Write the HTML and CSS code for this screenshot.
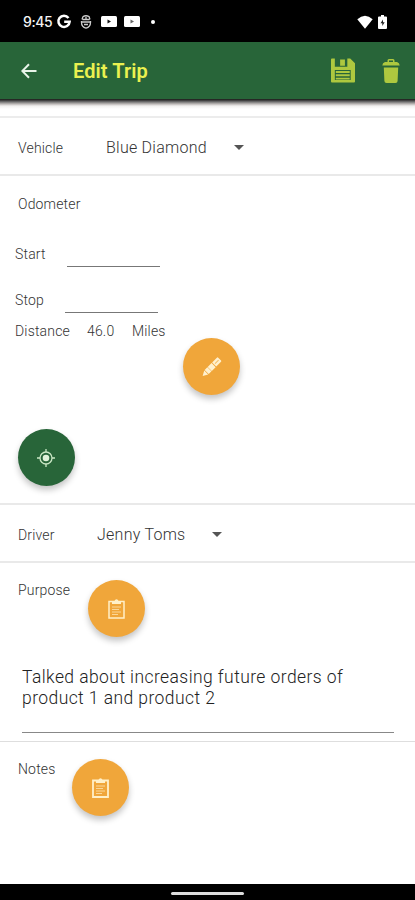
FILE: index.html
```html
<!DOCTYPE html>
<html lang="en">
<head>
<meta charset="utf-8">
<title>Edit Trip</title>
<link rel="stylesheet" href="styles.css">
</head>
<body>
<div class="phone">
  <div class="status">
    <span class="clock">9:45</span>
    <svg class="s-google" viewBox="0 0 16 16"><path d="M12.8 4.2A6 6 0 1 0 14 8.2H8.2" fill="none" stroke="#fff" stroke-width="2.7"/></svg>
    <svg class="s-badge" viewBox="0 0 12 14"><path d="M3 1.500Q6 0 9 1.500L10 4.500M1.500 6Q1 12 6 13.200Q11 12 10.500 6M2 4.500L3 1.500M2.500 4.500H9.500M1.500 7H10.500M4 9.500H8M6 2v3" fill="none" stroke="#ccc" stroke-width="1.300"/></svg>
    <svg class="s-video" viewBox="0 0 16 11"><rect width="16" height="11" rx="1.500" fill="#fff"/><path d="M6.500 3.500v4l3.500-2z" fill="#111"/></svg>
    <svg class="s-video s-video-2" viewBox="0 0 16 11"><rect width="16" height="11" rx="1.500" fill="#fff"/><path d="M6.500 3.500v4l3.500-2z" fill="#666"/></svg>
    <span class="dot"></span>
    <svg class="s-wifi" viewBox="0 0 16 14"><path d="M.3 4.2Q8-2.8 15.7 4.2L8 13.8Z" fill="#fff"/></svg>
    <svg class="s-battery" viewBox="0 0 9 14"><path d="M3 0h3v1.400h2q1 0 1 1V13q0 1-1 1H1q-1 0-1-1V2.400q0-1 1-1h2z" fill="#fff"/><path d="M5 4.500L2.500 8.200H4.300V11L6.700 7.200H5z" fill="#222"/></svg>
  </div>
  <header class="appbar">
    <svg class="back" viewBox="0 0 16 16"><path d="M15.500 8H1.500M8 1.200L1.300 8L8 14.800" fill="none" stroke="#e9f4e9" stroke-width="2"/></svg>
    <h1>Edit Trip</h1>
    <svg class="save" viewBox="0 0 25 25"><path fill-rule="evenodd" fill="#aec83f" d="M1 0H4V8.500H17V0H20L25 5V24Q25 25 24 25H1Q0 25 0 24V1Q0 0 1 0ZM4 12V22.500H20.500V12Z"/><path fill="#aec83f" d="M9.500 1h5v6.500h-5zM5 13h14.500v2H5zM5 16.500h14.500v2H5zM5 20h14.500v2H5z"/></svg>
    <svg class="trash" viewBox="0 0 18 24"><path fill="#aec83f" fill-rule="evenodd" d="M5.500 3V1.500Q5.500 0 7 0H11Q12.500 0 12.500 1.500V3H15Q17.500 3.600 17.700 6.500H.300Q.500 3.600 3 3ZM7 1.500V3H11V1.500ZM1.800 8.500H16.200L15.600 22Q15.500 24 13.500 24H4.500Q2.500 24 2.400 22Z"/></svg>
  </header>
  <main>
    <div class="strip"></div>
    <section class="row vehicle">
      <span class="label">Vehicle</span><span class="choice">Blue Diamond</span><i class="caret"></i>
    </section>
    <section class="odometer">
      <div class="label heading">Odometer</div>
      <div class="field start"><span class="label">Start</span><span class="line"></span></div>
      <div class="field stop"><span class="label">Stop</span><span class="line"></span></div>
      <div class="distance label"><span class="d1">Distance</span><span class="d2">46.0</span><span class="d3">Miles</span></div>
      <button class="fab edit" aria-label="Edit"><svg width="20" height="20" viewBox="0 0 20 20"><g transform="translate(-.5 .2) rotate(-45 10 10)" fill="#fff1cf"><path d="M-2.500 10L2.500 7.200V12.800ZM3.200 7.100H7V12.900H3.200ZM7.500 7.100H13V12.900H7.500ZM13.800 7.100H20.500Q21.500 7.100 21.500 8V12Q21.500 12.900 20.500 12.900H13.800Z"/><path d="M15 10H20" stroke="#f3bd68" stroke-width="1"/></g></svg></button>
      <button class="fab locate" aria-label="Locate"><svg width="18" height="18" viewBox="0 0 18 18" fill="none" stroke="#c9e6c4" stroke-width="1.300"><circle cx="9" cy="9" r="6"/><circle cx="9" cy="9" r="3.300" fill="#e0f2da" stroke="none"/><path d="M9 0v3M9 15v3M0 9h3M15 9h3"/></svg></button>
    </section>
    <section class="row driver">
      <span class="label">Driver</span><span class="choice">Jenny Toms</span><i class="caret"></i>
    </section>
    <section class="purpose">
      <div class="head"><span class="label">Purpose</span>
        <button class="fab" aria-label="Purpose list"><svg width="17" height="20" viewBox="0 0 17 20"><path d="M1 2.500H16V19H1Z" fill="none" stroke="#fff0c8" stroke-width="1.500"/><path d="M4 2H6.500Q7 .200 8.500 .200T10.500 2H13V5H4Z" fill="#fff0c8"/><path d="M4 8h9M4 10.500h7M4 13h9M4 15.500h6" stroke="#fbd797"/></svg></button></div>
      <p class="memo">Talked about increasing future orders of<br>product 1 and product 2</p>
    </section>
    <section class="notes">
      <div class="head"><span class="label">Notes</span>
        <button class="fab" aria-label="Notes list"><svg width="17" height="20" viewBox="0 0 17 20"><path d="M1 2.500H16V19H1Z" fill="none" stroke="#fff0c8" stroke-width="1.800"/><path d="M4 2H6.500Q7 .200 8.500 .200T10.500 2H13V5H4Z" fill="#fff0c8"/><path d="M4 8h9M4 10.500h7M4 13h9M4 15.500h6" stroke="#fbd797"/></svg></button></div>
    </section>
  </main>
  <footer class="nav"><span class="pill"></span></footer>
</div>
</body>
</html>
```
FILE: styles.css
```css
* { box-sizing: border-box; }
body { margin: 0; background: #fff; font-family: Roboto, "Liberation Sans", sans-serif; color: #444; }
.phone { width: 415px; height: 900px; display: flex; flex-direction: column; overflow: hidden; }
svg { display: block; flex: none; }

.status { height: 42px; flex: none; background: #000; display: flex; align-items: center; padding: 1px 28px 0 23px; color: #f4f4f4; }
.clock { width: 29px; font: 500 14px/20px Inter, sans-serif; letter-spacing: -.4px; white-space: nowrap; }
.s-google { width: 16px; height: 15px; margin-left: 4px; }
.s-badge { width: 12px; height: 14px; margin-left: 8px; }
.s-video { width: 16px; height: 11px; margin-left: 9px; }
.s-video-2 { margin-left: 7px; }
.dot { width: 4px; height: 4px; border-radius: 50%; background: #fff; margin-left: 11px; }
.s-wifi { width: 16px; height: 14px; margin-left: auto; }
.s-battery { width: 9px; height: 14px; margin-left: 5px; }

.appbar { height: 57px; flex: none; background: #286539; display: flex; align-items: center; padding: 0 15px 0 21px; }
.back { width: 16px; height: 16px; }
h1 { margin: 0 0 0 36px; font-size: 20px; line-height: 24px; font-weight: 600; color: #ebf150; letter-spacing: .1px; }
.save { width: 24px; height: 25px; margin-left: auto; }
.trash { width: 18px; height: 24px; margin-left: 27px; }

main { flex: 1; display: flex; flex-direction: column; }
main > * { flex: none; }
.strip { height: 19px; border-bottom: 2px solid #ececec; background: linear-gradient(#1c211c 0, #302f2f 1px, #777 3px, #bdb9b7 5px, #f1f0ef 7px, #fff 10px); }
.label { font-size: 14px; line-height: 18px; letter-spacing: .17px; font-weight: 300; color: #333; white-space: nowrap; }
.row { display: flex; align-items: center; height: 58px; padding: 3px 0 0 18px; border-bottom: 2px solid #e9e9e9; }
.row .label { width: 88px; padding-top: 1px; }
.choice { width: 128px; font-size: 16px; line-height: 20px; letter-spacing: .25px; font-weight: 300; color: #333; white-space: nowrap; }
.caret { width: 10px; height: 5px; background: #555; clip-path: polygon(0 0, 100% 0, 50% 100%); }
.driver .label { width: 79px; }
.driver .choice { width: 115px; }

.odometer { height: 329px; padding: 19px 15px 0; border-bottom: 2px solid #e9e9e9; }
.heading { padding-left: 3px; }
.field { display: flex; align-items: flex-start; height: 23px; }
.start { margin-top: 32px; }
.stop { margin-top: 23px; }
.field .label { width: 52px; }
.stop .label { width: 50px; }
.line { width: 93px; height: 1px; background: #777; margin-top: 21px; }
.distance { display: flex; margin-top: 8px; }
.d1 { width: 72px; }
.d2 { width: 45px; }

.fab { display: flex; align-items: center; justify-content: center; width: 57px; height: 57px; padding: 0; border: 0; border-radius: 50%; background: #f0a63a; box-shadow: 0 4px 6px rgba(0,0,0,.23); flex: none; }
.edit { margin: -2px 0 0 168px; }
.locate { margin: 34px 0 0 2.500px; background: #286539; }
.purpose { height: 179px; border-bottom: 1px solid #dedede; }
.head { display: flex; align-items: flex-start; padding: 17px 0 0 18px; }
.head .label { width: 69.500px; margin-top: 1px; }
.memo { margin: 30px 21px 0 22px; height: 66px; border-bottom: 1px solid #888; font-size: 17.500px; line-height: 21px; letter-spacing: .42px; font-weight: 350; color: #222; white-space: nowrap; }
.notes .head .label { width: 54px; }
.nav { height: 16px; flex: none; background: #000; display: flex; justify-content: center; padding-top: 8px; }
.pill { width: 73px; height: 3px; border-radius: 2px; background: #ddd; }
```
